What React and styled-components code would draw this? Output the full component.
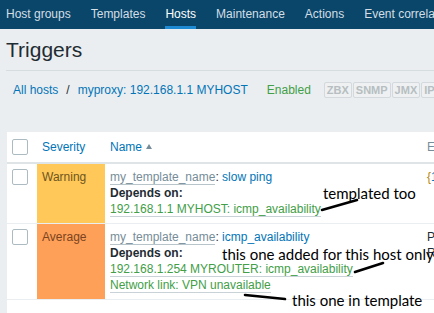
import React from 'react';
import styled, { createGlobalStyle } from 'styled-components';

const Global = createGlobalStyle`
  html, body { margin: 0; padding: 0; background: #ebeef0; }
  body {
    font-family: "Liberation Sans", Arial, sans-serif;
    font-size: 12px;
    color: #1f2c33;
  }
`;

const Page = styled.div`
  position: relative;
  width: 434px;
  height: 313px;
  overflow: hidden;
  background: #ebeef0;
  display: flex;
  flex-direction: column;
`;

const TopNav = styled.nav`
  display: flex;
  gap: 20px;
  height: 29px;
  padding-left: 6px;
  background: #0a466a;
  white-space: nowrap;
  flex-shrink: 0;
`;

const NavItem = styled.a`
  display: flex;
  align-items: center;
  box-sizing: border-box;
  height: 29px;
  padding-top: 2px;
  border-bottom: 3px solid ${(p) => (p.$active ? '#1d8ad3' : 'transparent')};
  color: ${(p) => (p.$active ? '#ffffff' : '#d3dee5')};
  font-size: 12px;
  text-decoration: none;
  flex-shrink: 0;
`;

const Header = styled.header`
  margin-left: 6px;
  padding: 9px 0 8px;
  border-bottom: 1px solid #d6dde0;
`;

const Title = styled.h1`
  margin: 0;
  font-size: 21px;
  line-height: 24px;
  font-weight: normal;
  color: #1f2c33;
`;

const Breadcrumbs = styled.div`
  display: flex;
  align-items: center;
  height: 16px;
  margin-top: 11px;
  padding-left: 13px;
  white-space: nowrap;
  flex-shrink: 0;
`;

const Crumb = styled.a`
  color: #0275b8;
  text-decoration: none;
`;

const Sep = styled.span`
  margin: 0 8px;
  color: #1f2c33;
`;

const Enabled = styled.span`
  margin-left: 19px;
  color: #429e47;
`;

const Statuses = styled.div`
  display: flex;
  gap: 1px;
  margin-left: 13px;
`;

const StatusBox = styled.span`
  box-sizing: border-box;
  height: 16px;
  line-height: 14px;
  padding: 0 2px;
  border: 1px solid #d3d9dc;
  border-radius: 2px;
  background: #eef0f2;
  color: #b6bec1;
  font-size: 11px;
  font-weight: bold;
`;

const TableWrap = styled.div`
  margin: 34px 0 0 7px;
  flex: 1;
  background: #ffffff;
  overflow: hidden;
`;

const Table = styled.table`
  border-collapse: separate;
  border-spacing: 0;
  table-layout: fixed;
  width: 640px;
`;

const Th = styled.th`
  padding: 7px 5px;
  line-height: 16px;
  text-align: left;
  font-weight: normal;
  color: ${(p) => (p.$muted ? '#768d99' : '#0275b8')};
  border-bottom: 2px solid #dfe4e7;
  white-space: nowrap;
  overflow: hidden;
`;

const Td = styled.td`
  padding: 5px 5px 6px;
  line-height: 16px;
  vertical-align: top;
  border-bottom: 1px solid #ebeef0;
  white-space: nowrap;
  overflow: hidden;
`;

const SeverityTd = styled(Td)`
  background: ${(p) => p.$bg};
  color: ${(p) => p.$fg};
`;

const Checkbox = styled.span`
  display: block;
  box-sizing: border-box;
  width: 16px;
  height: 16px;
  border: 1px solid #acbbc2;
  border-radius: 2px;
  background: #ffffff;
`;

const SortArrow = styled.span`
  display: inline-block;
  margin-left: 4px;
  vertical-align: 2px;
  width: 0;
  height: 0;
  border-left: 3.5px solid transparent;
  border-right: 3.5px solid transparent;
  border-bottom: 5px solid #768d99;
`;

const Line = styled.div`
  display: block;
  white-space: nowrap;
`;

const TemplateLink = styled.span`
  color: #768d99;
  border-bottom: 1px solid #b7c4ca;
`;

const Colon = styled.span`
  color: #1f2c33;
`;

const NameLink = styled.span`
  color: #0275b8;
`;

const DependsLabel = styled.div`
  font-weight: bold;
  color: #1f2c33;
`;

const DepLink = styled.span`
  color: #429e47;
  border-bottom: 1px solid #c9d3d7;
`;

const ExprBrace = styled.span`
  color: #b8860b;
`;

const ExprHost = styled.span`
  color: #0275b8;
`;

const ExprText = styled.span`
  color: #1f2c33;
`;

const Note = styled.div`
  position: absolute;
  left: ${(p) => p.$x}px;
  top: ${(p) => p.$y}px;
  font-family: Lato, "Open Sans", sans-serif;
  font-size: 15px;
  line-height: 18px;
  color: #000000;
  white-space: nowrap;
  pointer-events: none;
`;

const Overlay = styled.svg`
  position: absolute;
  left: 0;
  top: 0;
  pointer-events: none;
`;

const navItems = ['Host groups', 'Templates', 'Hosts', 'Maintenance', 'Actions', 'Event correlation'];

export default function App() {
  return (
    <>
      <Global />
      <Page>
        <TopNav>
          {navItems.map((n) => (
            <NavItem key={n} $active={n === 'Hosts'}>{n}</NavItem>
          ))}
        </TopNav>

        <Header>
          <Title>Triggers</Title>
        </Header>

        <Breadcrumbs>
          <Crumb>All hosts</Crumb>
          <Sep>/</Sep>
          <Crumb>myproxy: 192.168.1.1 MYHOST</Crumb>
          <Enabled>Enabled</Enabled>
          <Statuses>
            <StatusBox>ZBX</StatusBox>
            <StatusBox>SNMP</StatusBox>
            <StatusBox>JMX</StatusBox>
            <StatusBox>IPMI</StatusBox>
          </Statuses>
        </Breadcrumbs>

        <TableWrap>
          <Table>
            <colgroup>
              <col style={{ width: 30 }} />
              <col style={{ width: 68 }} />
              <col style={{ width: 317 }} />
              <col style={{ width: 225 }} />
            </colgroup>
            <thead>
              <tr>
                <Th><Checkbox /></Th>
                <Th>Severity</Th>
                <Th>Name<SortArrow /></Th>
                <Th $muted>Expression</Th>
              </tr>
            </thead>
            <tbody>
              <tr>
                <Td><Checkbox /></Td>
                <SeverityTd $bg="#ffc859" $fg="#6e5520">Warning</SeverityTd>
                <Td>
                  <Line>
                    <TemplateLink>my_template_name</TemplateLink><Colon>: </Colon>
                    <NameLink>slow ping</NameLink>
                  </Line>
                  <DependsLabel>Depends on:</DependsLabel>
                  <Line>
                    <DepLink>192.168.1.1 MYHOST: icmp_availability</DepLink>
                  </Line>
                </Td>
                <Td>
                  <ExprBrace>{'{'}</ExprBrace>
                  <ExprHost>192.168.1.1 MYHOST:icmppingsec.avg(5m)</ExprHost>
                  <ExprBrace>{'}'}</ExprBrace>
                </Td>
              </tr>
              <tr>
                <Td><Checkbox /></Td>
                <SeverityTd $bg="#ffa059" $fg="#7a4420">Average</SeverityTd>
                <Td>
                  <Line>
                    <TemplateLink>my_template_name</TemplateLink><Colon>: </Colon>
                    <NameLink>icmp_availability</NameLink>
                  </Line>
                  <DependsLabel>Depends on:</DependsLabel>
                  <Line>
                    <DepLink>192.168.1.254 MYROUTER: icmp_availability</DepLink>
                  </Line>
                  <Line>
                    <DepLink>Network link: VPN unavailable</DepLink>
                  </Line>
                </Td>
                <Td>
                  <Line><ExprText>Problem: {'{192.168.1.1 MYHOST:icmpping.max(3m)}=0'}</ExprText></Line>
                  <Line><ExprText>Recovery: {'{192.168.1.1 MYHOST:icmpping.min(3m)}=1'}</ExprText></Line>
                </Td>
              </tr>
            </tbody>
          </Table>
        </TableWrap>

        <Note $x={323} $y={184}>templated too</Note>
        <Note $x={222} $y={245}>this one added for this host only</Note>
        <Note $x={292} $y={291}>this one in template</Note>

        <Overlay width="434" height="313" viewBox="0 0 434 313">
          <g stroke="#000" strokeWidth="2.6" strokeLinecap="round">
            <line x1="322" y1="210" x2="357" y2="200" />
            <line x1="355" y1="272" x2="383" y2="263" />
            <line x1="245" y1="295" x2="285" y2="299" />
          </g>
        </Overlay>
      </Page>
    </>
  );
}
